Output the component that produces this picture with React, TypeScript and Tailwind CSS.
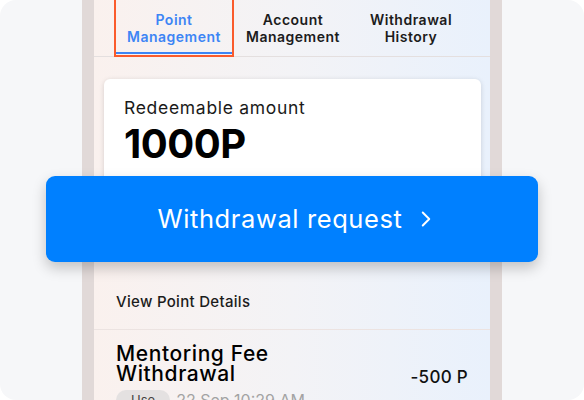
import { ChevronRight } from "lucide-react";

const tabs = [
   { top: "Point", bottom: "Management", active: true },
   { top: "Account", bottom: "Management", active: false },
   { top: "Withdrawal", bottom: "History", active: false },
];

export default function App() {
   return (
      <div className="w-[584px] h-[400px] bg-white overflow-hidden font-['Inter',sans-serif]">
         <div className="relative w-full h-full rounded-2xl bg-[#f6f7f9] overflow-hidden">
            {/* Phone frame */}
            <div className="ml-[82px] w-[420px] h-full border-x-[12px] border-[#e1d9d8]">
               <div className="h-full bg-gradient-to-r from-[#faf1ee] via-[#f3f3f6] to-[#e9f1fc]">
                  {/* Tabs */}
                  <div className="flex h-[57px] px-[20px] border-b border-[#e4dfdf]">
                     {tabs.map((tab) => (
                        <div
                           key={tab.bottom + tab.top}
                           className={
                              tab.active
                                 ? "relative w-[120px] flex flex-col items-center justify-center border-2 border-t-0 border-[#fa5b2c] text-[#3d85f5] text-[14px] tracking-[0.5px] font-semibold leading-[17px] -mb-px"
                                 : "w-[118px] flex flex-col items-center justify-center text-[#1c1c1c] text-[14px] tracking-[0.5px] font-semibold leading-[17px]"
                           }
                        >
                           <span>{tab.top}</span>
                           <span>{tab.bottom}</span>
                           {tab.active && (
                              <div className="absolute left-0 right-0 bottom-[1px] h-[2px] bg-[#3d85f5]" />
                           )}
                        </div>
                     ))}
                  </div>

                  {/* Balance card */}
                  <div className="pt-[22px] pl-[10px] pr-[9px]">
                     <div className="h-[150px] bg-white rounded-md shadow-[0_1px_5px_rgba(0,0,0,0.15)] pl-[20px] pt-[16px]">
                        <p className="text-[17.5px] leading-[26px] tracking-[0.7px] text-[#1a1a1a]">Redeemable amount</p>
                        <p className="text-[40px] leading-[46px] font-bold text-black tracking-[-0.5px]">1000P</p>
                     </div>
                  </div>

                  {/* Point details */}
                  <div className="h-[101px] flex items-end pl-[22px] pb-[16px] border-b border-[#ece3e1]">
                     <span className="text-[15px] leading-[22px] tracking-[0.3px] font-medium text-[#1c1c1c]">View Point Details</span>
                  </div>
                  <div className="flex items-end justify-between pl-[22px] pr-[22px] pt-[14px]">
                     <p className="text-[21px] leading-[20px] tracking-[0.6px] font-medium text-black">
                        Mentoring Fee
                        <br />
                        Withdrawal
                     </p>
                     <span className="text-[17px] leading-[20px] tracking-[0.3px] font-medium text-[#111] mb-[-3px]">-500 P</span>
                  </div>
                  <div className="flex items-center gap-[6px] pl-[22px] mt-[6px]">
                     <span className="px-[15px] rounded-full bg-[#e4e1e1] text-[13px] leading-[20px] text-[#444]">Use</span>
                     <span className="text-[16px] leading-[20px] text-[#a3a3a3]">22 Sep 10:29 AM</span>
                  </div>
               </div>
            </div>

            {/* Withdrawal request button overlaps the card */}
            <button className="absolute left-[46px] top-[176px] w-[492px] h-[86px] rounded-[9px] bg-[#0080ff] text-white flex items-center justify-center gap-[10px] pl-[12px] shadow-[0_6px_14px_rgba(0,0,0,0.22)]">
               <span className="text-[25.5px] leading-none font-normal tracking-[0.6px]">Withdrawal request</span>
               <ChevronRight className="w-[26px] h-[26px]" strokeWidth={1.8} />
            </button>
         </div>
      </div>
   );
}
